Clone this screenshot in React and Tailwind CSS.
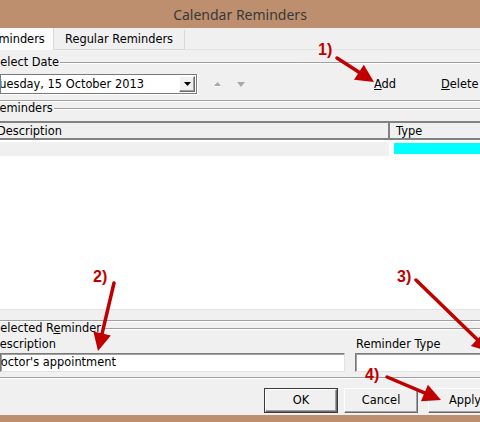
import React from "react";

const RED = "#c00000";

// straight arrow with a filled head, tip at (x2, y2)
const Arrow = ({ x1, y1, x2, y2 }) => {
  const dx = x2 - x1;
  const dy = y2 - y1;
  const len = Math.hypot(dx, dy);
  const ux = dx / len;
  const uy = dy / len;
  const head = 18;
  const half = 9;
  const bx = x2 - ux * head;
  const by = y2 - uy * head;
  const pts = [
    [x2, y2],
    [bx - uy * half, by + ux * half],
    [bx + uy * half, by - ux * half],
  ]
    .map((p) => p.join(","))
    .join(" ");
  return (
    <g>
      <line x1={x1} y1={y1} x2={bx + ux * 2} y2={by + uy * 2} stroke={RED} strokeWidth="3.5" strokeLinecap="round" />
      <polygon points={pts} fill={RED} />
    </g>
  );
};

const GroupLine = () => <div className="flex-1 h-[2px] border-t border-[#a0a0a0] border-b border-b-white" />;

const Button = ({ children, isDefault }) => (
  <div className={`w-[74px] h-[25px] shrink-0 ${isDefault ? "border border-[#3c3c3c]" : ""}`}>
    <div className="w-full h-full flex items-center justify-center border border-t-white border-l-white border-r-[#696969] border-b-[#696969] shadow-[inset_-1px_-1px_0_#a0a0a0] bg-[#f0f0f0]">
      {children}
    </div>
  </div>
);

const Note = ({ className, children }) => (
  <span className={`absolute font-['Liberation_Sans',sans-serif] font-bold text-[16px] leading-none text-[#c00000] ${className}`}>
    {children}
  </span>
);

export default function App() {
  return (
    <div className="relative w-[480px] h-[422px] overflow-hidden bg-[#f0f0f0] flex flex-col font-['DejaVu_Sans',sans-serif] text-[11.4px] leading-[13px] text-black">
      {/* Title bar */}
      <div className="h-[28px] shrink-0 bg-[#be8f6f] flex items-center justify-center font-['Noto_Sans',sans-serif] text-[14px] text-[#383838]">
        Calendar Reminders
      </div>

      {/* Tabs */}
      <div className="h-[22px] shrink-0 flex items-end">
        <div className="h-[22px] w-[54px] shrink-0 bg-[#fbfbfb] border-r border-[#d9d9d9] flex items-center overflow-hidden">
          <span className="ml-[-16px] whitespace-nowrap">Reminders</span>
        </div>
        <div className="h-[20px] flex items-center px-[11px] border-r border-b border-[#d9d9d9] whitespace-nowrap">
          Regular Reminders
        </div>
        <div className="flex-1 h-[20px] border-b border-[#e3e3e3]" />
      </div>

      {/* Select Date group */}
      <div className="mt-[6px] h-[13px] shrink-0 flex items-center">
        <span className="ml-[-7px] pr-[1px] whitespace-nowrap">Select Date</span>
        <GroupLine />
      </div>
      <div className="mt-[5px] h-[20px] shrink-0 flex items-center whitespace-nowrap">
        <div className="w-[197px] h-[20px] shrink-0 bg-white border border-[#7a7a7a] shadow-[1px_1px_0_white] flex items-center overflow-hidden">
          <span className="ml-[-7px]">Tuesday, 15 October 2013</span>
          <div className="ml-auto mr-[1px] w-[16px] h-[16px] shrink-0 flex items-center justify-center bg-[#f0f0f0] border border-t-white border-l-white border-r-[#696969] border-b-[#696969] shadow-[inset_-1px_-1px_0_#a0a0a0]">
            <svg width="7" height="4" viewBox="0 0 7 4">
              <polygon points="0,0 7,0 3.5,4" fill="#000" />
            </svg>
          </div>
        </div>
        <svg className="ml-[16px] shrink-0" width="9" height="6" viewBox="0 0 9 6">
          <polygon points="1,5 4.5,1 8,5" fill="#a8a8a8" />
          <line x1="1" y1="5.5" x2="8" y2="5.5" stroke="#ffffff" strokeWidth="1" />
        </svg>
        <svg className="ml-[15px] shrink-0" width="8" height="5" viewBox="0 0 8 5">
          <polygon points="0,0 8,0 4,5" fill="#a8a8a8" />
        </svg>
        <span className="ml-[129px]">
          <span className="underline">A</span>dd
        </span>
        <span className="ml-[45px]">
          <span className="underline">D</span>elete
        </span>
      </div>
      <div className="mt-[6px] h-[2px] shrink-0 border-t border-[#a0a0a0] border-b border-b-white" />

      {/* Reminders group */}
      <div className="h-[13px] shrink-0 flex items-center">
        <span className="ml-[-8px] pr-[1px] whitespace-nowrap">Reminders</span>
        <GroupLine />
      </div>
      <div className="mt-[6px] h-[189px] shrink-0 flex flex-col bg-white border-t-2 border-t-[#828282] border-b border-b-[#e3e3e3]">
        <div className="h-[17px] shrink-0 flex bg-[#f0f0f0] border-b-2 border-[#828282]">
          <div className="w-[390px] shrink-0 pt-[2px] border-r-2 border-[#828282] overflow-hidden">
            <span className="ml-[-3px] block">Description</span>
          </div>
          <div className="pl-[6px] pt-[2px]">Type</div>
        </div>
        <div className="mt-[2px] h-[14px] shrink-0 flex">
          <div className="w-[389px] shrink-0 bg-[#f0f0f0]" />
          <div className="ml-[5px] mt-[1px] h-[11px] flex-1 bg-[#00ffff]" />
        </div>
        <div className="flex-1" />
      </div>
      <div className="mt-[10px] h-[2px] shrink-0 border-t border-[#a0a0a0] border-b border-b-white" />

      {/* Selected Reminder group */}
      <div className="h-[13px] shrink-0 flex items-center">
        <span className="ml-[-7px] pr-[1px] whitespace-nowrap">
          Selected R<span className="underline">e</span>minder
        </span>
        <GroupLine />
      </div>
      <div className="mt-[3px] h-[13px] shrink-0 flex whitespace-nowrap">
        <div className="w-[356px] shrink-0">
          <span className="ml-[-9px] block">Description</span>
        </div>
        <span>Reminder Type</span>
      </div>
      <div className="mt-[2px] h-[19px] shrink-0 flex">
        <div className="w-[345px] shrink-0 bg-white border border-t-[#7a7a7a] border-l-[#7a7a7a] border-r-[#e3e3e3] border-b-[#e3e3e3] shadow-[inset_1px_1px_0_#a0a0a0] flex items-center overflow-hidden whitespace-nowrap">
          <span className="ml-[-9px]">Doctor's appointment</span>
        </div>
        <div className="ml-[10px] w-[140px] shrink-0 bg-white border border-t-[#7a7a7a] border-l-[#7a7a7a] border-r-[#e3e3e3] border-b-[#e3e3e3] shadow-[inset_1px_1px_0_#a0a0a0]" />
      </div>
      <div className="mt-[5px] h-[2px] shrink-0 border-t border-[#a0a0a0] border-b border-b-white" />

      {/* Dialog buttons */}
      <div className="mt-[9px] h-[25px] shrink-0 flex">
        <div className="ml-[264px] shrink-0">
          <Button isDefault>OK</Button>
        </div>
        <div className="ml-[6px] shrink-0">
          <Button>Cancel</Button>
        </div>
        <div className="ml-[10px] shrink-0">
          <Button>Apply</Button>
        </div>
      </div>
      <div className="mt-[2px] flex-1 bg-[#be8f6f]" />

      {/* Annotations */}
      <svg className="absolute inset-0 pointer-events-none" width="480" height="422" viewBox="0 0 480 422">
        <Arrow x1={337} y1={58} x2={374} y2={82} />
        <Arrow x1={114} y1={283} x2={98} y2={351} />
        <Arrow x1={416} y1={280} x2={490} y2={352} />
        <Arrow x1={387} y1={377} x2={441} y2={400} />
      </svg>
      <Note className="left-[318px] top-[42px]">1)</Note>
      <Note className="left-[93px] top-[269px]">2)</Note>
      <Note className="left-[397px] top-[269px]">3)</Note>
      <Note className="left-[365px] top-[367px]">4)</Note>
    </div>
  );
}
